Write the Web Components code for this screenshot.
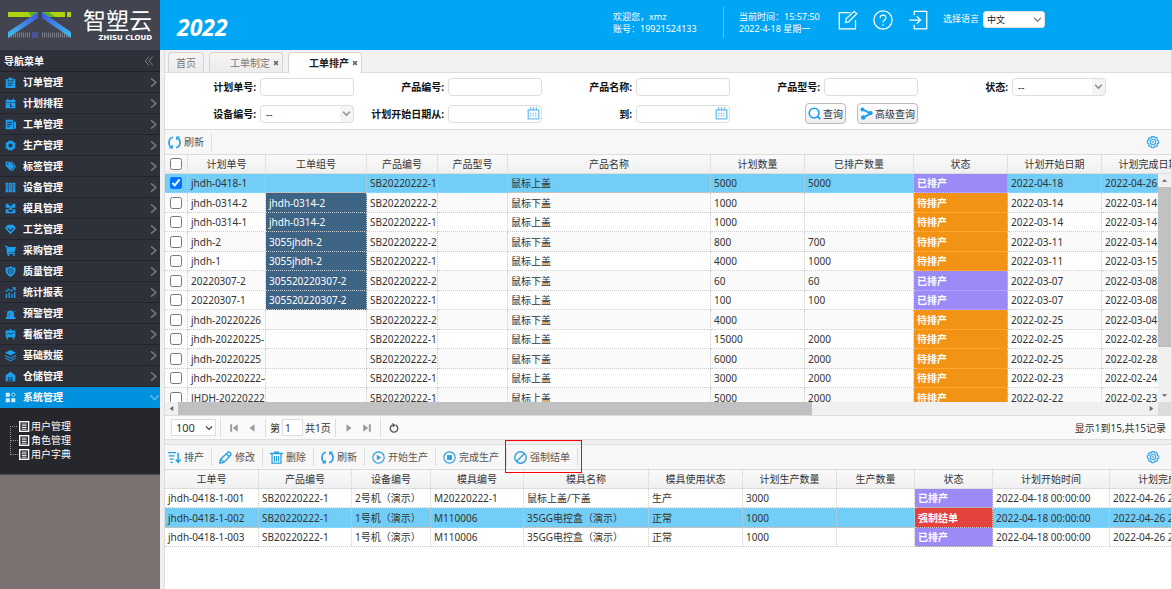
<!DOCTYPE html>
<html lang="zh-CN">
<head>
<meta charset="utf-8">
<title>智塑云</title>
<style>
    html, body { height: 100%; margin: 0; }
    body {
        font: 10px/14px "Noto Sans", "Noto Sans CJK SC", sans-serif;
        color: #333;
        background: #fff;
        overflow: hidden;
    }
</style>
</head>
<body>
<zs-app></zs-app>

<script>
// every icon is drawn on a 16 x 16 grid
const S = 'fill="none" stroke="currentColor"';
const icons = {
    order: '<path d="M1 3h3v3h8V3h3v13H1z"/><path d="M5 1h6v4H5z"/><path d="M4 9h8M4 12h6" stroke="#2f313a" stroke-width="1.3"/>',
    plan: '<path d="M1 3h2V1h2v2h6V1h2v2h2v3H1zM1 7h14v8H1z"/><path d="M8 8v4h3" fill="none" stroke="#2f313a" stroke-width="1.5"/>',
    work: '<path d="M1 1h11v14H1zM13 4h3v9l-2 2h-1z"/><path d="M3 5h7M3 8h7M3 11h4" stroke="#2f313a" stroke-width="1.4"/>',
    gear: '<path fill-rule="evenodd" d="M5 1h6l1 2 3 1v3l-1 1 1 1v3l-3 1-1 2H5l-1-2-3-1V9l1-1-1-1V4l3-1zM8 5a3 3 0 1 0 0 6 3 3 0 0 0 0-6z"/>',
    tag: '<path fill-rule="evenodd" d="M1 1h6l6 7-5 6-7-7zM4 3a1.3 1.3 0 1 0 0 2.600 1.300 1.300 0 0 0 0-2.600z"/><path d="M9 1l6 7-5 7" fill="none" stroke="currentColor" stroke-width="1.500"/>',
    device: '<path d="M1 1h4v14H1zM6 1h4v14H6zM11 1h4v14h-4z"/><path d="M3 3v9M8 3v9M13 3v9" stroke="#2f313a" stroke-width=".6"/>',
    mold: '<path d="M1 1h14v6H1zM1 9h14v6H1z"/><path d="M4 1h8l-4 4zM3 8h10M4 10h8v1l-3 2H7l-3-2z" fill="#2f313a"/><path d="M6 8h4" stroke="currentColor" stroke-width="2"/>',
    craft: '<path d="M4 1h8l4 5-8 9-8-9z"/><path d="M4 6l4 4 4-4" fill="none" stroke="#2f313a" stroke-width="1.8"/>',
    cart: '<path d="M0 1h3l1 2h12l-2 7H5v1h9v2H3L2 3H0z"/><circle cx="5" cy="14.500" r="1.500"/><circle cx="13" cy="14.500" r="1.500"/>',
    quality: '<path d="M8 0l3 2h4v7l-3 4-4 3-4-3-3-4V2h4z"/><circle cx="8" cy="7.500" r="3.500" fill="none" stroke="#2f313a" stroke-width="1.300"/><circle cx="8" cy="7.500" r="1" fill="#2f313a"/>',
    chart: `<path d="M1 7l4-4 4 3 5-4M11 1h4v4" ${S} stroke-width="1.500"/><path d="M1 10h2v6H1zM5 8h2v8H5zM9 10h2v6H9zM13 7h2v9h-2z"/>`,
    alarm: '<path d="M3 13V8c0-6 10-6 10 0v5h2v3H1v-3zM0 4l2 1-1 1zM16 4l-2 1 1 1zM2 1l2 2M14 1l-2 2"/><path d="M6 12V9l2-2" fill="none" stroke="#2f313a"/>',
    board: '<path d="M1 2h6V0h2v2h6v10h-2l1 3h-2l-1-3H5l-1 3H2l1-3H1z"/><path d="M3 8l3-2 2 2 5-3" fill="none" stroke="#2f313a" stroke-width="1.400"/>',
    layers: `<path d="M8 0l8 4-8 4-8-4z"/><path d="M0 8l8 4 8-4M0 11.500l8 4 8-4" ${S} stroke-width="1.500"/>`,
    store: '<path d="M1 6l7-5 7 5v9H1z"/><path d="M4 9h3v2H4zM8 9h3v2H8zM4 12h3v2H4zM8 12h3v2H8z" fill="#2f313a"/>',
    system: `<path d="M1 1h6v6H1zM1 9h6v6H1zM9 9h6v6H9z"/><path d="M12 1l3 3-3 3-3-3z" ${S} stroke-width="1.300"/>`,
    page: '<path d="M0 0h15v16H0z"/><path d="M2 2h11v12H2z" fill="#26272d"/><path d="M4 4.500h7M4 7h7M4 9.500h7M4 12h7" stroke="currentColor" stroke-width="1.300"/>',
    edit: `<path d="M10 2H1v13h13V8M6 10l.5-3L13 1l2 2-6.500 6.500z" ${S}/>`,
    help: `<circle cx="8" cy="8" r="7.300" ${S}/><path d="M5.700 6.300c0-3 4.600-3 4.600 0 0 1.800-2.300 1.700-2.300 3.700M8 11.300v1.300" ${S}/>`,
    exit: `<path d="M5 4V1h10v14H5v-3M1 8h9M7 5l3 3-3 3" ${S}/>`,
    down: `<path d="M2 5l6 6 6-6" ${S} stroke-width="2.400"/>`,
    right: `<path d="M3 2l7 6-7 6" ${S} stroke-width="2.200"/>`,
    collapse: `<path d="M8 1L2 8l6 7M14 1L8 8l6 7" ${S} stroke-width="1.300"/>`,
    close: `<path d="M3 3l10 10M13 3L3 13" ${S} stroke-width="4"/>`,
    calendar: `<path d="M1.500 3.500h13v11h-13z" ${S} stroke-width="1.600"/><path d="M4.500 0v5M8 0v5M11.500 0v5" ${S} stroke-width="1.300"/><path d="M4 8h8M4 11h8" ${S} stroke-width="1.600" stroke-dasharray="1.500 1.500"/>`,
    search: `<circle cx="7.500" cy="7.500" r="6" ${S} stroke-width="2"/><path d="M12 12l3 3" ${S} stroke-width="2.200"/>`,
    share: `<path d="M3 3l10 5L4 13" ${S} stroke-width="2.400"/><circle cx="3" cy="3" r="2.400"/><circle cx="13" cy="7.500" r="2.600"/><circle cx="4" cy="13" r="2.800"/>`,
    refresh: `<path d="M6 1.500C0 3 0 11 4 14M10 14.500c6-1.500 6-9.500 2-12.500" ${S} stroke-width="2"/><path d="M1 15.500h5v-5zM15 .5h-5v5z"/>`,
    schedule: `<path d="M0 2h10M1 6h7M2 10h5M3 14h3M12.500 2v12M9.500 10.500l3 3.500 3-3.500" ${S} stroke-width="1.800"/>`,
    modify: `<path d="M1 15l1-5L11 1.500c2-1 4.500 1.500 3.500 3.500L6 14zM9 3.500l4 4M2 10l4 4" ${S} stroke-width="1.700"/>`,
    trash: `<path d="M0 3h16M5 1.500h6" ${S} stroke-width="1.800"/><path d="M2.500 3.500v11.500h11V3.500M5.500 6v7M8 6v7M10.500 6v7" ${S} stroke-width="1.500"/>`,
    start: `<circle cx="8" cy="8" r="7" ${S} stroke-width="1.400"/><path d="M6 4.500L11.500 8 6 11.500z"/>`,
    stop: `<circle cx="8" cy="8" r="7" ${S} stroke-width="1.400"/><path d="M5 5h6v6H5z"/>`,
    forbid: `<circle cx="8" cy="8" r="7" ${S} stroke-width="1.700"/><path d="M3 13L13 3" ${S} stroke-width="1.700"/>`,
    setting: `<path d="M6.500 1h3l1 1.500 2-.5 1.500 2-.5 1.500L15.500 7v2.500l-2 1 .5 2-2 1.500-2-.5-1 2h-2.500l-1-2-2 .5-1.500-2 .5-1.500-2-1.500V6.500l2-1-.5-2L4 2l1.500.5z" ${S} stroke-width="1.700"/><circle cx="8" cy="8" r="3.600" ${S} stroke-width="1.500"/><circle cx="8" cy="8" r="1.300" ${S}/>`,
    first: '<path d="M2 2h3v12H2zM14 2v12L6 8z"/>',
    prev: '<path d="M12 2v12L4 8z"/>',
    next: '<path d="M4 2v12l8-6z"/>',
    last: '<path d="M11 2h3v12h-3zM2 2v12l8-6z"/>',
    reload: `<path d="M5 3.500a6 6 0 1 0 6 0" ${S} stroke-width="2.200"/><path d="M5 0l6 3-5 4z"/>`,
    up: '<path d="M2 11h12L8 5z"/>',
    dn: '<path d="M2 5h12l-6 6z"/>'
};

function define(name, html, init) {
    const template = document.createElement('template');
    template.innerHTML = html;
    customElements.define(name, class extends HTMLElement {
        constructor() {
            super();
            this.attachShadow({ mode: 'open' });
        }
        connectedCallback() {
            if (this.shadowRoot.childNodes.length) return;
            this.shadowRoot.appendChild(template.content.cloneNode(true));
            if (init) init(this, this.shadowRoot);
        }
    });
}

define('zs-icon', `
<style>
    :host { display: block; width: 13px; height: 13px; flex: none; }
    svg { display: block; width: 100%; height: 100%; overflow: visible; }
</style>
<svg viewBox="0 0 16 16" fill="currentColor" aria-hidden="true"></svg>`,
(el, root) => {
    root.querySelector('svg').innerHTML = icons[el.getAttribute('name')];
});

define('zs-logo', `
<style>
    :host { display: flex; align-items: center; height: 50px; padding: 0 8px; background: #42444f; color: #fff; }
    svg { width: 64px; height: 28px; flex: none; }
    div { flex: 1; display: flex; flex-direction: column; align-items: flex-end; }
    b { font: 23px/25px "Liberation Sans", "Noto Sans CJK SC", sans-serif; }
    small { font: bold 7px/8px "DejaVu Sans", sans-serif; }
</style>
<svg viewBox="0 0 64 28">
    <defs>
        <linearGradient id="a" x1="1" x2="0" y1="0" y2="1"><stop stop-color="#3f55e0"/><stop offset="1" stop-color="#3fc0ea"/></linearGradient>
        <linearGradient id="b" x1="0" x2="1" y1="0" y2="1"><stop stop-color="#3f55e0"/><stop offset="1" stop-color="#3fc0ea"/></linearGradient>
    </defs>
    <path d="M1 24h21M34 24h28" stroke="#7b7e88" stroke-width="5" stroke-dasharray="1 1"/>
    <path d="M24 21h6v6h-6z" fill="#45549a"/>
    <path d="M0 1h30v5H0z" fill="#a9d40f"/><path d="M20 1h10v5h-6z" fill="#5bb02c"/>
    <path d="M34 1h23v5H34zM59 1h4v5h-4z" fill="#a9d40f"/><path d="M34 1h7l6 5H34z" fill="#5bb02c"/>
    <path d="M30 1v6L0 27v-6z" fill="url(#a)"/>
    <path d="M34 1v6l29 20v-6z" fill="url(#b)"/>
</svg>
<div><b>智塑云</b><small>ZHISU CLOUD</small></div>`);

define('zs-nav-item', `
<style>
    :host { display: block; }
    a {
        display: flex;
        align-items: center;
        gap: 7px;
        height: 20px;
        padding: 0 0 0 5px;
        border-bottom: 1px solid #23252c;
        background: #2f313a;
        color: #fff;
        font-weight: bold;
        text-decoration: none;
    }
    zs-icon { width: 11px; height: 11px; color: #1c9ff0; }
    span { flex: 1; }
    .arrow { color: #777a85; }
    :host([open]) a { background: #0092de; border-color: #0092de; }
    :host([open]) zs-icon { color: #d8ecfa; }
    :host([open]) .arrow { color: #5fb4e4; }
</style>
<a href="#"><span><slot></slot></span></a>`,
(el, root) => {
    const open = el.hasAttribute('open');
    root.querySelector('span').insertAdjacentHTML('beforebegin', `<zs-icon name="${el.getAttribute('icon')}"></zs-icon>`);
    root.querySelector('a').insertAdjacentHTML('beforeend', `<zs-icon class="arrow" name="${open ? 'down' : 'right'}"></zs-icon>`);
});

define('zs-sidebar', `
<style>
    :host { display: flex; flex-direction: column; width: 160px; flex: none; background: #7b7170; }
    header {
        display: flex;
        justify-content: space-between;
        align-items: center;
        height: 21px;
        padding: 0 6px 0 4px;
        border-bottom: 1px solid #1f2127;
        background: #2f313a;
        color: #fff;
        font-weight: bold;
    }
    header button { border: 0; padding: 0; background: none; color: #8b8e98; }
    header zs-icon { width: 10px; height: 10px; }
    ul { list-style: none; margin: 0; padding: 11px 0 13px 19px; background: #26272d; border-bottom: 1px solid #4a4747; }
    li { position: relative; height: 14px; }
    li a { display: flex; align-items: center; gap: 1px; color: #fff; text-decoration: none; }
    li zs-icon { width: 11px; height: 11px; }
    li::before {
        content: "";
        position: absolute;
        left: -9px;
        top: -7px;
        width: 7px;
        height: 14px;
        border: dotted #999;
        border-width: 0 0 1px 1px;
    }
    li:first-child::before { height: 0; top: 7px; border-left: 0; }
</style>
<zs-logo></zs-logo>
<header>导航菜单<button aria-label="collapse"><zs-icon name="collapse"></zs-icon></button></header>
<nav></nav>
<ul>
    <li><a href="#"><zs-icon name="page"></zs-icon>用户管理</a></li>
    <li><a href="#"><zs-icon name="page"></zs-icon>角色管理</a></li>
    <li><a href="#"><zs-icon name="page"></zs-icon>用户字典</a></li>
</ul>`,
(el, root) => {
    const menu = [
        ['order', '订单管理'], ['plan', '计划排程'], ['work', '工单管理'], ['gear', '生产管理'],
        ['tag', '标签管理'], ['device', '设备管理'], ['mold', '模具管理'], ['craft', '工艺管理'],
        ['cart', '采购管理'], ['quality', '质量管理'], ['chart', '统计报表'], ['alarm', '预警管理'],
        ['board', '看板管理'], ['layers', '基础数据'], ['store', '仓储管理'], ['system', '系统管理']
    ];
    root.querySelector('nav').innerHTML = menu.map(([icon, text]) =>
        `<zs-nav-item icon="${icon}"${icon === 'system' ? ' open' : ''}>${text}</zs-nav-item>`).join('');
});

define('zs-header', `
<style>
    :host { display: flex; align-items: flex-start; height: 50px; padding: 0 127px 0 17px; background: #00a5f3; color: #fff; font-size: 9px; line-height: 12px; }
    h1 { flex: 1; margin: 0; font: italic bold 23px/54px "Noto Sans", sans-serif; }
    .user { width: 110px; height: 27px; margin-top: 7px; padding-top: 4px; border-right: 1px solid #5cc4f5; }
    .time { width: 99px; padding: 11px 0 0 15px; }
    button { border: 0; padding: 0; margin: 10px 15px 0 0; background: none; color: #fff; }
    button zs-icon { width: 20px; height: 20px; }
    label { margin: 13px 4px 0 0; }
    .select { display: grid; align-items: center; width: 62px; height: 17px; margin-top: 11px; }
    select { grid-area: 1 / 1; appearance: none; width: 100%; height: 17px; padding: 0 3px; border: 1px solid #ddd; border-radius: 3px; background: #fff; color: #222; font: inherit; }
    .select zs-icon { grid-area: 1 / 1; justify-self: end; margin-right: 3px; width: 9px; height: 9px; color: #888; }
</style>
<h1>2022</h1>
<div class="user">欢迎您，xmz<br>账号：19921524133</div>
<div class="time">当前时间：15:57:50<br>2022-4-18 星期一</div>
<button aria-label="edit"><zs-icon name="edit"></zs-icon></button>
<button aria-label="help"><zs-icon name="help"></zs-icon></button>
<button aria-label="exit"><zs-icon name="exit"></zs-icon></button>
<label for="lang">选择语言</label>
<div class="select"><select id="lang"><option>中文</option></select><zs-icon name="down"></zs-icon></div>`);

define('zs-tabs', `
<style>
    :host { display: flex; align-items: flex-end; gap: 5px; height: 22px; padding-left: 3px; background: #f2f2f2; border-bottom: 1px solid #ddd; }
    button {
        display: flex;
        align-items: center;
        gap: 3px;
        height: 20px;
        padding: 0 3px 0 20px;
        border: 1px solid #d3d3d3;
        border-bottom: 0;
        border-radius: 4px 4px 0 0;
        background: linear-gradient(#f5f5f5, #ececec);
        color: #777;
        font: inherit;
    }
    button.home { padding: 0 7px; }
    button.on { height: 21px; margin-bottom: -1px; background: #fff; color: #222; font-weight: bold; }
    zs-icon { width: 6px; height: 6px; color: #666; }
</style>
<button class="home">首页</button>
<button>工单制定<zs-icon name="close"></zs-icon></button>
<button class="on">工单排产<zs-icon name="close"></zs-icon></button>`);

define('zs-field', `
<style>
    :host { display: flex; align-items: center; gap: 4px; }
    label { width: 90px; text-align: right; color: #111; font-weight: bold; white-space: nowrap; }
    .box { display: grid; align-items: center; width: 94px; }
    input, select {
        grid-area: 1 / 1;
        box-sizing: border-box;
        appearance: none;
        width: 100%;
        height: 18px;
        margin: 0;
        padding: 0 5px;
        border: 1px solid #ddd;
        border-radius: 4px;
        background: #fff;
        color: #333;
        font: inherit;
    }
    select { background: linear-gradient(90deg, #fff 79px, #f4f4f4 79px); }
    zs-icon { grid-area: 1 / 1; justify-self: end; margin-right: 2px; color: #6cc0f3; pointer-events: none; }
    select + zs-icon { width: 9px; height: 9px; margin-right: 3px; color: #888; }
</style>
<label for="f"></label>
<div class="box"></div>`,
(el, root) => {
    const type = el.getAttribute('type');
    root.querySelector('label').textContent = el.getAttribute('label') + ':';
    root.querySelector('.box').innerHTML = type === 'select'
        ? '<select id="f"><option>--</option></select><zs-icon name="down"></zs-icon>'
        : '<input id="f" type="text">' + (type === 'date' ? '<zs-icon name="calendar"></zs-icon>' : '');
});

define('zs-query', `
<style>
    :host {
        display: grid;
        grid-template-columns: repeat(5, 188px);
        grid-auto-rows: 27px;
        padding: 0 0 2px 1px;
        background: #fff;
    }
    .buttons { display: flex; justify-content: flex-end; align-items: center; gap: 11px; }
    button {
        display: flex;
        align-items: center;
        gap: 2px;
        height: 21px;
        padding: 0 2px;
        border: 1px solid #bbb;
        border-radius: 4px;
        background: linear-gradient(#fff, #eee);
        color: #333;
        font: inherit;
    }
    zs-icon { color: #1c9ff0; }
</style>
<zs-field label="计划单号"></zs-field>
<zs-field label="产品编号"></zs-field>
<zs-field label="产品名称"></zs-field>
<zs-field label="产品型号"></zs-field>
<zs-field label="状态" type="select"></zs-field>
<zs-field label="设备编号" type="select"></zs-field>
<zs-field label="计划开始日期从" type="date"></zs-field>
<zs-field label="到" type="date"></zs-field>
<div class="buttons">
    <button><zs-icon name="search"></zs-icon>查询</button>
    <button><zs-icon name="share"></zs-icon>高级查询</button>
</div>`);

define('zs-tool', `
<style>
    :host { display: flex; align-items: center; position: relative; height: 18px; padding-right: 7px; border-right: 1px solid #ddd; }
    button { display: flex; align-items: center; gap: 3px; padding: 0; border: 0; background: none; color: #555; font: inherit; }
    zs-icon { color: #2a9fe0; }
    :host([marked])::after {
        content: "";
        position: absolute;
        inset: -8px -5px -7px -9px;
        border: 1px solid #f00;
    }
</style>
<button><slot></slot></button>`,
(el, root) => {
    root.querySelector('slot').insertAdjacentHTML('beforebegin', `<zs-icon name="${el.getAttribute('icon')}"></zs-icon>`);
});

define('zs-toolbar', `
<style>
    :host { display: flex; align-items: center; gap: 7px; height: 24px; flex: none; padding: 0 12px 0 3px; background: #f7f7f7; border-top: 1px solid #ddd; }
    .set { margin-left: auto; border: 0; padding: 0; background: none; color: #3fa9e4; }
    .set zs-icon { width: 12px; height: 12px; }
</style>
<slot></slot>
<button class="set" aria-label="setting"><zs-icon name="setting"></zs-icon></button>`);

const grids = {
    plan: {
        check: true,
        cols: [['计划单号', 78], ['工单组号', 101], ['产品编号', 71], ['产品型号', 70], ['产品名称', 203], ['计划数量', 94],
            ['已排产数量', 109], ['状态', 94], ['计划开始日期', 94], ['计划完成日期', 94]],
        selected: 0,
        group: 1,
        rows: [
            ['jhdh-0418-1', '', 'SB20220222-1', '', '鼠标上盖', '5000', '5000', '已排产', '2022-04-18', '2022-04-26'],
            ['jhdh-0314-2', 'jhdh-0314-2', 'SB20220222-2', '', '鼠标下盖', '1000', '', '待排产', '2022-03-14', '2022-03-14'],
            ['jhdh-0314-1', 'jhdh-0314-2', 'SB20220222-1', '', '鼠标上盖', '1000', '', '待排产', '2022-03-14', '2022-03-14'],
            ['jhdh-2', '3055jhdh-2', 'SB20220222-2', '', '鼠标下盖', '800', '700', '待排产', '2022-03-11', '2022-03-14'],
            ['jhdh-1', '3055jhdh-2', 'SB20220222-1', '', '鼠标上盖', '4000', '1000', '待排产', '2022-03-11', '2022-03-15'],
            ['20220307-2', '305520220307-2', 'SB20220222-2', '', '鼠标下盖', '60', '60', '已排产', '2022-03-07', '2022-03-08'],
            ['20220307-1', '305520220307-2', 'SB20220222-1', '', '鼠标上盖', '100', '100', '已排产', '2022-03-07', '2022-03-08'],
            ['jhdh-20220226', '', 'SB20220222-2', '', '鼠标下盖', '4000', '', '待排产', '2022-02-25', '2022-03-04'],
            ['jhdh-20220225-1', '', 'SB20220222-1', '', '鼠标上盖', '15000', '2000', '待排产', '2022-02-25', '2022-02-28'],
            ['jhdh-20220225', '', 'SB20220222-2', '', '鼠标下盖', '6000', '2000', '待排产', '2022-02-25', '2022-02-28'],
            ['jhdh-20220222-4', '', 'SB20220222-1', '', '鼠标上盖', '3000', '2000', '待排产', '2022-02-23', '2022-02-24'],
            ['JHDH-20220222', '', 'SB20220222-1', '', '鼠标上盖', '5000', '2000', '待排产', '2022-02-22', '2022-02-23']
        ]
    },
    order: {
        cols: [['工单号', 94], ['产品编号', 93], ['设备编号', 79], ['模具编号', 93], ['模具名称', 125], ['模具使用状态', 94],
            ['计划生产数量', 94], ['生产数量', 78], ['状态', 78], ['计划开始时间', 117], ['计划完成时间', 117]],
        selected: 1,
        rows: [
            ['jhdh-0418-1-001', 'SB20220222-1', '2号机（演示）', 'M20220222-1', '鼠标上盖/下盖', '生产', '3000', '', '已排产', '2022-04-18 00:00:00', '2022-04-26 23:59:59'],
            ['jhdh-0418-1-002', 'SB20220222-1', '1号机（演示）', 'M110006', '35GG电控盒（演示）', '正常', '1000', '', '强制结单', '2022-04-18 00:00:00', '2022-04-26 23:59:59'],
            ['jhdh-0418-1-003', 'SB20220222-1', '1号机（演示）', 'M110006', '35GG电控盒（演示）', '正常', '1000', '', '已排产', '2022-04-18 00:00:00', '2022-04-26 23:59:59']
        ]
    }
};
const states = { '已排产': 'done', '待排产': 'wait', '强制结单': 'force' };

define('zs-grid', `
<style>
    :host {
        display: grid;
        grid-template: 20px minmax(0, 1fr) auto / minmax(0, 1fr) auto;
        flex: 1;
        min-height: 0;
        background: #fff;
    }
    .view { grid-area: 1 / 1 / 3 / 3; overflow: hidden; }
    table { table-layout: fixed; border-collapse: separate; border-spacing: 0; }
    th, td {
        box-sizing: border-box;
        height: 20px;
        padding: 0 0 0 3px;
        border: dotted #ccc;
        border-width: 0 1px 1px 0;
        overflow: hidden;
        white-space: nowrap;
        text-align: left;
        line-height: 14px;
    }
    th { padding: 0; border-top: 1px solid #ddd; border-bottom: 1px solid #ddd; text-align: center; font-weight: normal; background: linear-gradient(#fafafa, #f0f0f0); }
    tbody tr:nth-child(odd) td { height: 19px; }
    tbody tr:nth-child(even) { background: #fafafa; }
    tbody tr.selected { background: #72cdf7; }
    td.done { background: #9c8bf7; }
    td.wait { background: #f39315; }
    td.force { background: #e4423c; }
    td.done, td.wait, td.force { color: #fff; font-weight: bold; }
    td.group { background: #3e6485; color: #fff; }
    .check { padding: 0; text-align: center; }
    .check input { display: block; width: 12px; height: 12px; margin: 0 auto; }
    .vbar, .hbar { display: none; background: #f0f0f0; color: #666; }
    .vbar zs-icon, .hbar zs-icon { width: 7px; height: 7px; margin: 3px; }
    :host([scroll]) .vbar { grid-area: 2 / 2; display: flex; flex-direction: column; width: 13px; }
    :host([scroll]) .hbar { grid-area: 3 / 1 / 4 / 3; display: flex; height: 13px; }
    .thumb { flex: 0 0 70%; background: #c1c1c1; }
    .hbar .thumb { flex-basis: 63%; }
    .hbar .corner { width: 13px; background: #dcdcdc; }
    i { flex: 1; }
</style>
<div class="view"><table></table></div>
<div class="vbar"><zs-icon name="up"></zs-icon><div class="thumb"></div><i></i><zs-icon name="dn"></zs-icon></div>
<div class="hbar"><zs-icon name="prev"></zs-icon><div class="thumb"></div><i></i><zs-icon name="next"></zs-icon><div class="corner"></div></div>`,
(el, root) => {
    const g = grids[el.getAttribute('source')];
    const table = root.querySelector('table');
    const box = (label, on) => `<input type="checkbox" aria-label="${label}"${on ? ' checked' : ''}>`;
    let width = g.cols.reduce((sum, c) => sum + c[1], 0);
    if (g.check) width += 23;
    table.style.width = width + 'px';
    table.innerHTML = `
        <colgroup>${g.check ? '<col style="width:23px">' : ''}${g.cols.map(c => `<col style="width:${c[1]}px">`).join('')}</colgroup>
        <thead><tr>${g.check ? `<th class="check">${box('all')}</th>` : ''}${g.cols.map(c => `<th>${c[0]}</th>`).join('')}</tr></thead>
        <tbody>${g.rows.map((row, r) => `<tr class="${r === g.selected ? 'selected' : ''}">
            ${g.check ? `<td class="check">${box(row[0], r === g.selected)}</td>` : ''}
            ${row.map((text, c) => `<td class="${states[text] || (c === g.group && text ? 'group' : '')}">${text}</td>`).join('')}
        </tr>`).join('')}</tbody>`;
});

define('zs-pager', `
<style>
    :host { display: flex; align-items: center; height: 23px; flex: none; padding: 0 5px 0 6px; border-top: 1px solid #ddd; border-bottom: 1px solid #ddd; background: #fafafa; }
    .size { display: grid; align-items: center; width: 45px; }
    select, input { box-sizing: border-box; height: 17px; padding: 0 4px; margin: 0; border: 1px solid #ddd; background: #fff; color: #333; font: inherit; }
    select { grid-area: 1 / 1; appearance: none; width: 100%; font-size: 11px; }
    .size zs-icon { grid-area: 1 / 1; justify-self: end; width: 8px; height: 8px; margin-right: 3px; color: #444; }
    input { width: 21px; padding: 0 2px; margin: 0 2px; }
    zs-icon { width: 10px; height: 10px; }
    button { border: 0; padding: 0; margin: 0 4px; background: none; color: #999; }
    button.reload { color: #555; }
    hr { width: 1px; height: 18px; margin: 0 4px; border: 0; background: #ddd; }
    label { display: flex; align-items: center; }
    p { margin: 0 0 0 auto; }
</style>
<div class="size"><select aria-label="size"><option>100</option></select><zs-icon name="down"></zs-icon></div>
<hr>
<button aria-label="first"><zs-icon name="first"></zs-icon></button>
<button aria-label="prev"><zs-icon name="prev"></zs-icon></button>
<hr>
<label>第<input type="text" value="1">共1页</label>
<hr>
<button aria-label="next"><zs-icon name="next"></zs-icon></button>
<button aria-label="last"><zs-icon name="last"></zs-icon></button>
<hr>
<button class="reload" aria-label="reload"><zs-icon name="reload"></zs-icon></button>
<p>显示1到15,共15记录</p>`);

define('zs-app', `
<style>
    :host { display: flex; height: 100vh; }
    .page { flex: 1; min-width: 0; display: flex; flex-direction: column; }
    .main { flex: 1; min-height: 0; display: flex; flex-direction: column; border: solid #ddd; border-width: 0 1px; margin-left: 4px; }
    .wrap { flex: 1; min-height: 0; display: flex; flex-direction: column; background: #efefef; }
    .split { height: 4px; flex: none; background: #efefef; }
    .south { display: flex; flex-direction: column; height: 145px; flex: none; }
</style>
<zs-sidebar></zs-sidebar>
<div class="page">
    <zs-header></zs-header>
    <div class="wrap">
        <div class="main">
            <zs-tabs></zs-tabs>
            <zs-query></zs-query>
            <zs-toolbar><zs-tool icon="refresh">刷新</zs-tool></zs-toolbar>
            <zs-grid source="plan" scroll></zs-grid>
            <zs-pager></zs-pager>
            <div class="split"></div>
            <div class="south">
                <zs-toolbar>
                    <zs-tool icon="schedule">排产</zs-tool>
                    <zs-tool icon="modify">修改</zs-tool>
                    <zs-tool icon="trash">删除</zs-tool>
                    <zs-tool icon="refresh">刷新</zs-tool>
                    <zs-tool icon="start">开始生产</zs-tool>
                    <zs-tool icon="stop">完成生产</zs-tool>
                    <zs-tool icon="forbid" marked>强制结单</zs-tool>
                </zs-toolbar>
                <zs-grid source="order"></zs-grid>
            </div>
        </div>
    </div>
</div>`);
</script>
</body>
</html>
